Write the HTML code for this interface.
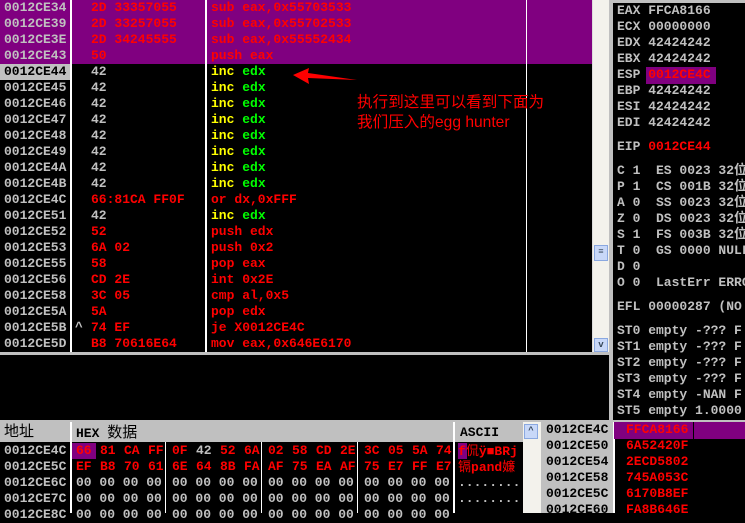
<!DOCTYPE html>
<html><head><meta charset="utf-8"><style>
*{margin:0;padding:0;box-sizing:border-box}
body{width:745px;height:513px;overflow:hidden;background:#000;position:relative;font:bold 13px "Liberation Mono","Noto Sans CJK SC",monospace;}
.a{position:absolute;white-space:pre;line-height:16px;height:16px}
.g{color:#c0c0c0}.r{color:#ff0000}.y{color:#ffff00}.gr{color:#00ff00}.k{color:#000}
.bx{position:absolute}
.cjk{font-family:"Liberation Sans","Noto Sans CJK SC",sans-serif;font-weight:normal}
</style></head><body>
<div class="bx" style="left:0;top:0;width:592px;height:64px;background:#800080"></div>
<div class="bx" style="left:0;top:64px;width:70px;height:16px;background:#c0c0c0"></div>
<div class="bx" style="left:70px;top:0;width:2px;height:352px;background:#fff"></div>
<div class="bx" style="left:205px;top:0;width:2px;height:352px;background:#fff"></div>
<div class="bx" style="left:526px;top:0;width:1px;height:352px;background:#fff"></div>
<div class="bx" style="left:592px;top:0;width:17px;height:353px;background:#f3f2ec;border-left:1px solid #ddd"></div>
<div class="bx" style="left:594px;top:245px;width:14px;height:16px;background:#c8d8f8;border:1px solid #8aa8e0;color:#456;font-size:9px;line-height:13px;text-align:center">≡</div>
<div class="bx" style="left:594px;top:338px;width:14px;height:14px;background:#c8d8f8;border:1px solid #8aa8e0;color:#345;font-size:9px;line-height:12px;text-align:center">v</div>
<div class="bx" style="left:0;top:352px;width:609px;height:3px;background:#c0c0c0"></div>
<div class="bx" style="left:609px;top:0;width:4px;height:422px;background:#c0c0c0"></div>

<svg class="bx" style="left:0;top:0" width="745" height="513"><polygon points="293,75 309,68 308,73 357,80 308,78 309,84" fill="#ff0000"/></svg>
<div class="a r cjk" style="left:357px;top:95px;font-size:15.6px">执行到这里可以看到下面为</div>
<div class="a r cjk" style="left:357px;top:115px;font-size:15.6px">我们压入的egg hunter</div>

<div class="bx" style="left:613px;top:0;width:132px;height:3px;background:#c0c0c0"></div>
<div class="bx" style="left:646px;top:67px;width:70px;height:17px;background:#800080"></div>

<div class="bx" style="left:0;top:420px;width:745px;height:2px;background:#c0c0c0"></div>
<div class="bx" style="left:0;top:422px;width:523px;height:20px;background:#c0c0c0"></div>
<div class="bx" style="left:70px;top:422px;width:2px;height:91px;background:#fff"></div>
<div class="bx" style="left:453px;top:422px;width:2px;height:91px;background:#fff"></div>
<div class="bx" style="left:165px;top:442px;width:1px;height:71px;background:#fff"></div>
<div class="bx" style="left:261px;top:442px;width:1px;height:71px;background:#fff"></div>
<div class="bx" style="left:357px;top:442px;width:1px;height:71px;background:#fff"></div>
<div class="a k cjk" style="left:4px;top:424px;font-size:15px">地址</div>
<div class="a k" style="left:76px;top:425px">HEX <span class="cjk" style="font-size:15px">数据</span></div>
<div class="a k" style="left:460px;top:425px">ASCII</div>
<div class="bx" style="left:72px;top:443px;width:24px;height:16px;background:#800080"></div>
<div class="bx" style="left:458px;top:443px;width:9px;height:16px;background:#800080"></div>
<div class="bx" style="left:523px;top:422px;width:18px;height:91px;background:#f3f2ec"></div>
<div class="bx" style="left:524px;top:424px;width:14px;height:15px;background:#c8d8f8;border:1px solid #8aa8e0;color:#345;font-size:9px;line-height:12px;text-align:center">^</div>

<div class="bx" style="left:541px;top:422px;width:72px;height:91px;background:#c0c0c0"></div>
<div class="bx" style="left:613px;top:422px;width:2px;height:91px;background:#fff"></div>
<div class="bx" style="left:614px;top:422px;width:131px;height:17px;background:#800080"></div>
<div class="bx" style="left:693px;top:422px;width:1px;height:17px;background:#000"></div>

<div class="a g" style="left:4px;top:0">0012CE34</div><div class="a r" style="left:91px;top:0">2D 33357055</div><div class="a r" style="left:211px;top:0">sub eax,0x55703533</div>
<div class="a g" style="left:4px;top:16px">0012CE39</div><div class="a r" style="left:91px;top:16px">2D 33257055</div><div class="a r" style="left:211px;top:16px">sub eax,0x55702533</div>
<div class="a g" style="left:4px;top:32px">0012CE3E</div><div class="a r" style="left:91px;top:32px">2D 34245555</div><div class="a r" style="left:211px;top:32px">sub eax,0x55552434</div>
<div class="a g" style="left:4px;top:48px">0012CE43</div><div class="a r" style="left:91px;top:48px">50</div><div class="a r" style="left:211px;top:48px">push eax</div>
<div class="a k" style="left:4px;top:64px">0012CE44</div><div class="a g" style="left:91px;top:64px">42</div><div class="a" style="left:211px;top:64px"><span class="y">inc</span> <span class="gr">edx</span></div>
<div class="a g" style="left:4px;top:80px">0012CE45</div><div class="a g" style="left:91px;top:80px">42</div><div class="a" style="left:211px;top:80px"><span class="y">inc</span> <span class="gr">edx</span></div>
<div class="a g" style="left:4px;top:96px">0012CE46</div><div class="a g" style="left:91px;top:96px">42</div><div class="a" style="left:211px;top:96px"><span class="y">inc</span> <span class="gr">edx</span></div>
<div class="a g" style="left:4px;top:112px">0012CE47</div><div class="a g" style="left:91px;top:112px">42</div><div class="a" style="left:211px;top:112px"><span class="y">inc</span> <span class="gr">edx</span></div>
<div class="a g" style="left:4px;top:128px">0012CE48</div><div class="a g" style="left:91px;top:128px">42</div><div class="a" style="left:211px;top:128px"><span class="y">inc</span> <span class="gr">edx</span></div>
<div class="a g" style="left:4px;top:144px">0012CE49</div><div class="a g" style="left:91px;top:144px">42</div><div class="a" style="left:211px;top:144px"><span class="y">inc</span> <span class="gr">edx</span></div>
<div class="a g" style="left:4px;top:160px">0012CE4A</div><div class="a g" style="left:91px;top:160px">42</div><div class="a" style="left:211px;top:160px"><span class="y">inc</span> <span class="gr">edx</span></div>
<div class="a g" style="left:4px;top:176px">0012CE4B</div><div class="a g" style="left:91px;top:176px">42</div><div class="a" style="left:211px;top:176px"><span class="y">inc</span> <span class="gr">edx</span></div>
<div class="a g" style="left:4px;top:192px">0012CE4C</div><div class="a r" style="left:91px;top:192px">66:81CA FF0F</div><div class="a r" style="left:211px;top:192px">or dx,0xFFF</div>
<div class="a g" style="left:4px;top:208px">0012CE51</div><div class="a g" style="left:91px;top:208px">42</div><div class="a" style="left:211px;top:208px"><span class="y">inc</span> <span class="gr">edx</span></div>
<div class="a g" style="left:4px;top:224px">0012CE52</div><div class="a r" style="left:91px;top:224px">52</div><div class="a r" style="left:211px;top:224px">push edx</div>
<div class="a g" style="left:4px;top:240px">0012CE53</div><div class="a r" style="left:91px;top:240px">6A 02</div><div class="a r" style="left:211px;top:240px">push 0x2</div>
<div class="a g" style="left:4px;top:256px">0012CE55</div><div class="a r" style="left:91px;top:256px">58</div><div class="a r" style="left:211px;top:256px">pop eax</div>
<div class="a g" style="left:4px;top:272px">0012CE56</div><div class="a r" style="left:91px;top:272px">CD 2E</div><div class="a r" style="left:211px;top:272px">int 0x2E</div>
<div class="a g" style="left:4px;top:288px">0012CE58</div><div class="a r" style="left:91px;top:288px">3C 05</div><div class="a r" style="left:211px;top:288px">cmp al,0x5</div>
<div class="a g" style="left:4px;top:304px">0012CE5A</div><div class="a r" style="left:91px;top:304px">5A</div><div class="a r" style="left:211px;top:304px">pop edx</div>
<div class="a g" style="left:4px;top:320px">0012CE5B</div><div class="a g" style="left:75px;top:320px">^</div><div class="a r" style="left:91px;top:320px">74 EF</div><div class="a r" style="left:211px;top:320px">je X0012CE4C</div>
<div class="a g" style="left:4px;top:336px">0012CE5D</div><div class="a r" style="left:91px;top:336px">B8 70616E64</div><div class="a r" style="left:211px;top:336px">mov eax,0x646E6170</div>

<div class="a g" style="left:617px;top:3px">EAX FFCA8166</div>
<div class="a g" style="left:617px;top:19px">ECX 00000000</div>
<div class="a g" style="left:617px;top:35px">EDX 42424242</div>
<div class="a g" style="left:617px;top:51px">EBX 42424242</div>
<div class="a g" style="left:617px;top:67px">ESP <span class="r">0012CE4C</span></div>
<div class="a g" style="left:617px;top:83px">EBP 42424242</div>
<div class="a g" style="left:617px;top:99px">ESI 42424242</div>
<div class="a g" style="left:617px;top:115px">EDI 42424242</div>
<div class="a g" style="left:617px;top:139px">EIP <span class="r">0012CE44</span></div>
<div class="a g" style="left:617px;top:163px">C 1  ES 0023 32位</div>
<div class="a g" style="left:617px;top:179px">P 1  CS 001B 32位</div>
<div class="a g" style="left:617px;top:195px">A 0  SS 0023 32位</div>
<div class="a g" style="left:617px;top:211px">Z 0  DS 0023 32位</div>
<div class="a g" style="left:617px;top:227px">S 1  FS 003B 32位</div>
<div class="a g" style="left:617px;top:243px">T 0  GS 0000 NULL</div>
<div class="a g" style="left:617px;top:259px">D 0</div>
<div class="a g" style="left:617px;top:275px">O 0  LastErr ERROR</div>
<div class="a g" style="left:617px;top:299px">EFL 00000287 (NO</div>
<div class="a g" style="left:617px;top:323px">ST0 empty -??? F</div>
<div class="a g" style="left:617px;top:339px">ST1 empty -??? F</div>
<div class="a g" style="left:617px;top:355px">ST2 empty -??? F</div>
<div class="a g" style="left:617px;top:371px">ST3 empty -??? F</div>
<div class="a g" style="left:617px;top:387px">ST4 empty -NAN F</div>
<div class="a g" style="left:617px;top:403px">ST5 empty 1.0000</div>

<div class="a g" style="left:4px;top:443px">0012CE4C</div>
<div class="a g" style="left:4px;top:459px">0012CE5C</div>
<div class="a g" style="left:4px;top:475px">0012CE6C</div>
<div class="a g" style="left:4px;top:491px">0012CE7C</div>
<div class="a g" style="left:4px;top:507px">0012CE8C</div>
<div class="a r" style="left:76px;top:443px">66</div>
<div class="a r" style="left:100px;top:443px">81</div><div class="a r" style="left:124px;top:443px">CA</div><div class="a r" style="left:148px;top:443px">FF</div>
<div class="a r" style="left:172px;top:443px">0F</div><div class="a g" style="left:196px;top:443px">42</div><div class="a r" style="left:220px;top:443px">52</div><div class="a r" style="left:244px;top:443px">6A</div>
<div class="a r" style="left:268px;top:443px">02</div><div class="a r" style="left:292px;top:443px">58</div><div class="a r" style="left:316px;top:443px">CD</div><div class="a r" style="left:340px;top:443px">2E</div>
<div class="a r" style="left:364px;top:443px">3C</div><div class="a r" style="left:388px;top:443px">05</div><div class="a r" style="left:412px;top:443px">5A</div><div class="a r" style="left:436px;top:443px">74</div>
<div class="a r" style="left:76px;top:459px">EF</div><div class="a r" style="left:100px;top:459px">B8</div><div class="a r" style="left:124px;top:459px">70</div><div class="a r" style="left:148px;top:459px">61</div>
<div class="a r" style="left:172px;top:459px">6E</div><div class="a r" style="left:196px;top:459px">64</div><div class="a r" style="left:220px;top:459px">8B</div><div class="a r" style="left:244px;top:459px">FA</div>
<div class="a r" style="left:268px;top:459px">AF</div><div class="a r" style="left:292px;top:459px">75</div><div class="a r" style="left:316px;top:459px">EA</div><div class="a r" style="left:340px;top:459px">AF</div>
<div class="a r" style="left:364px;top:459px">75</div><div class="a r" style="left:388px;top:459px">E7</div><div class="a r" style="left:412px;top:459px">FF</div><div class="a r" style="left:436px;top:459px">E7</div>
<div class="a g" style="left:76px;top:475px">00 00 00 00</div><div class="a g" style="left:172px;top:475px">00 00 00 00</div><div class="a g" style="left:268px;top:475px">00 00 00 00</div><div class="a g" style="left:364px;top:475px">00 00 00 00</div>
<div class="a g" style="left:76px;top:491px">00 00 00 00</div><div class="a g" style="left:172px;top:491px">00 00 00 00</div><div class="a g" style="left:268px;top:491px">00 00 00 00</div><div class="a g" style="left:364px;top:491px">00 00 00 00</div>
<div class="a g" style="left:76px;top:507px">00 00 00 00</div><div class="a g" style="left:172px;top:507px">00 00 00 00</div><div class="a g" style="left:268px;top:507px">00 00 00 00</div><div class="a g" style="left:364px;top:507px">00 00 00 00</div>
<div class="a r" style="left:458px;top:443px">f<span class="cjk">侃</span>ÿ■BRj</div>
<div class="a r" style="left:458px;top:459px"><span class="cjk">镉</span>pand<span class="cjk">嬚</span></div>
<div class="a g" style="left:458px;top:475px">........</div>
<div class="a g" style="left:458px;top:491px">........</div>

<div class="a k" style="left:546px;top:422px">0012CE4C</div><div class="a r" style="left:626px;top:422px">FFCA8166</div>
<div class="a k" style="left:546px;top:438px">0012CE50</div><div class="a r" style="left:626px;top:438px">6A52420F</div>
<div class="a k" style="left:546px;top:454px">0012CE54</div><div class="a r" style="left:626px;top:454px">2ECD5802</div>
<div class="a k" style="left:546px;top:470px">0012CE58</div><div class="a r" style="left:626px;top:470px">745A053C</div>
<div class="a k" style="left:546px;top:486px">0012CE5C</div><div class="a r" style="left:626px;top:486px">6170B8EF</div>
<div class="a k" style="left:546px;top:502px">0012CE60</div><div class="a r" style="left:626px;top:502px">FA8B646E</div>
</body></html>
